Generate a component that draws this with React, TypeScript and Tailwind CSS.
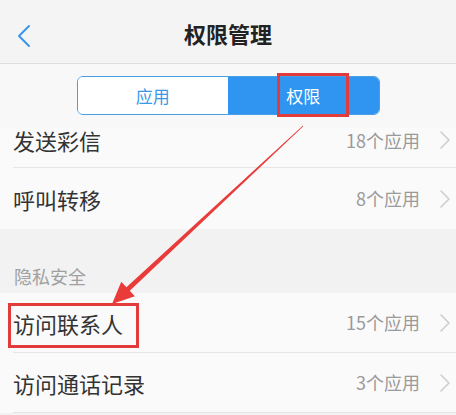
const font = { fontFamily: '"Noto Sans CJK SC", "Noto Sans", sans-serif' };

function Chevron() {
  return (
    <svg width="12" height="20" viewBox="0 0 12 20" className="shrink-0">
      <path d="M2 2 L10 10 L2 18" fill="none" stroke="#cdcdcd" strokeWidth="1.6" strokeLinecap="round" strokeLinejoin="round" />
    </svg>
  );
}

function Row({ label, count }: { label: string; count: string }) {
  return (
    <div className="flex items-center pl-[13px] h-[60px] bg-[#fafafa]">
      <div className="flex flex-1 items-center h-full border-b border-[#e6e6e6] pr-[5px]">
        <span className="flex-1 text-[22px] leading-6 text-[#333]">{label}</span>
        <span className="text-[18px] text-[#9a9a9a] mr-[19px]">{count}</span>
        <Chevron />
      </div>
    </div>
  );
}

export default function App() {
  return (
    <div className="relative w-[456px] h-[415px] overflow-hidden bg-[#f2f2f2]" style={font}>
      <div className="h-[64px] bg-[#f4f4f4] border-b border-[#dedede] flex items-center relative">
        <svg className="absolute left-[16px] top-[24px]" width="16" height="24" viewBox="0 0 16 24">
          <path d="M13 2 L3 12 L13 22" fill="none" stroke="#3b97e6" strokeWidth="2" strokeLinecap="round" strokeLinejoin="round" />
        </svg>
        <h1 className="w-full text-center text-[22px] font-semibold text-[#222] pt-[4px]">权限管理</h1>
      </div>

      <div className="h-[64px] bg-[#f8f8f8] flex items-start justify-center pt-[12px]">
        <div className="flex w-[303px] h-[39px] rounded-[6px] border border-[#4a9ee6] overflow-hidden">
          <div className="flex-1 flex items-center justify-center bg-white text-[17px] text-[#3a98e8]">应用</div>
          <div className="flex-1 flex items-center justify-center bg-[#2f95f1] text-[17px] text-white">权限</div>
        </div>
      </div>

      <div className="bg-[#fafafa]">
        <div className="flex pl-[13px] h-[40px]">
          <div className="flex flex-1 items-start h-full border-b border-[#e6e6e6] pr-[5px]">
            <span className="flex-1 text-[22px] leading-6 text-[#333]">发送彩信</span>
            <span className="text-[18px] leading-6 text-[#9a9a9a] mr-[19px]">18个应用</span>
            <div className="pt-[2px]">
              <Chevron />
            </div>
          </div>
        </div>
        <div className="flex items-center pl-[13px] h-[61px]">
          <div className="flex flex-1 items-center h-full pr-[5px]">
            <span className="flex-1 text-[22px] leading-6 text-[#333]">呼叫转移</span>
            <span className="text-[18px] text-[#9a9a9a] mr-[19px]">8个应用</span>
            <Chevron />
          </div>
        </div>
      </div>

      <div className="h-[64px] flex items-end pl-[14px] pb-[3px]">
        <span className="text-[18px] text-[#a0a0a0]">隐私安全</span>
      </div>

      <Row label="访问联系人" count="15个应用" />
      <Row label="访问通话记录" count="3个应用" />

      <div className="absolute left-[277px] top-[73px] w-[72px] h-[44px] border-[3px] border-[#e23b3b]" />
      <div className="absolute left-[8px] top-[303px] w-[131px] h-[45px] border-[3px] border-[#e23b3b]" />

      <svg className="absolute left-0 top-0 pointer-events-none" width="456" height="415" viewBox="0 0 456 415">
        <polygon
          fill="#ea3b3b"
          points="303.3,126.3 129.8,290.8 134.9,296.3 112,304 121.3,281.7 126.4,287.2 302.7,125.7"
        />
      </svg>
    </div>
  );
}
